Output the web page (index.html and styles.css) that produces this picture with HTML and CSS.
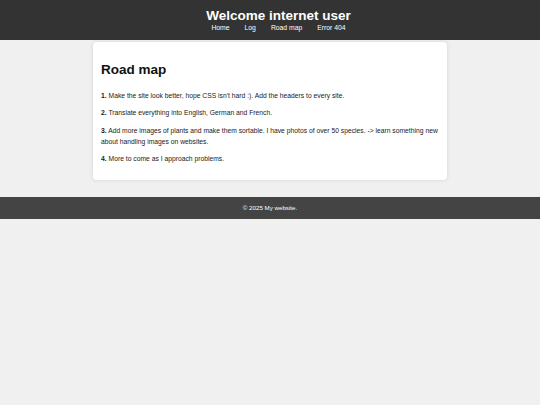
FILE: index.html
```html
<!DOCTYPE html>
<html lang="en">
<head>
<meta charset="utf-8">
<title>Road map</title>
<link rel="stylesheet" href="styles.css">
</head>
<body>
<header class="site-header">
  <h1 class="site-title">Welcome internet user</h1>
  <nav class="site-nav">
    <a href="#">Home</a>
    <a href="#">Log</a>
    <a href="#">Road map</a>
    <a href="#">Error 404</a>
  </nav>
</header>
<main class="card">
  <h2 class="card-title">Road map</h2>
  <p><b>1.</b> Make the site look better, hope CSS isn't hard :). Add the headers to every site.</p>
  <p><b>2.</b> Translate everything into English, German and French.</p>
  <p><b>3.</b> Add more images of plants and make them sortable. I have photos of over 50 species. -&gt; learn something new about handling images on websites.</p>
  <p><b>4.</b> More to come as I approach problems.</p>
</main>
<footer class="site-footer">© 2025 My website.</footer>
</body>
</html>
```
FILE: styles.css
```css
html, body {
  margin: 0;
  padding: 0;
}
body {
  background: #f0f0f0;
  font-family: "Liberation Sans", Arial, sans-serif;
  color: #111;
}
.site-header {
  background: #333;
  color: #fff;
  height: 40px;
  box-sizing: border-box;
  padding: 8px 0 0 17px;
  text-align: center;
}
.site-title {
  margin: 0;
  font-size: 13.5px;
  line-height: 16px;
  font-weight: bold;
}
.site-nav {
  display: flex;
  justify-content: center;
  gap: 15px;
  margin-top: 0;
}
.site-nav a {
  color: #fff;
  text-decoration: none;
  font-size: 6.8px;
  line-height: 8px;
}
.card {
  display: block;
  width: 354px;
  box-sizing: border-box;
  margin: 2px auto 0;
  background: #fff;
  border-radius: 4px;
  box-shadow: 0 0 4px rgba(0,0,0,0.12);
  padding: 19px 8px 16px;
}
.card-title {
  margin: 0 0 10.5px;
  font-size: 13.5px;
  line-height: 18px;
}
.card p {
  margin: 0 0 6.5px;
  font-size: 6.75px;
  line-height: 11px;
  color: #1a1a1a;
}
.card p:last-child {
  margin-bottom: 0;
}
.site-footer {
  margin-top: 17px;
  background: #444;
  color: #fff;
  height: 22px;
  line-height: 22px;
  text-align: center;
  font-size: 6.2px;
}
```
